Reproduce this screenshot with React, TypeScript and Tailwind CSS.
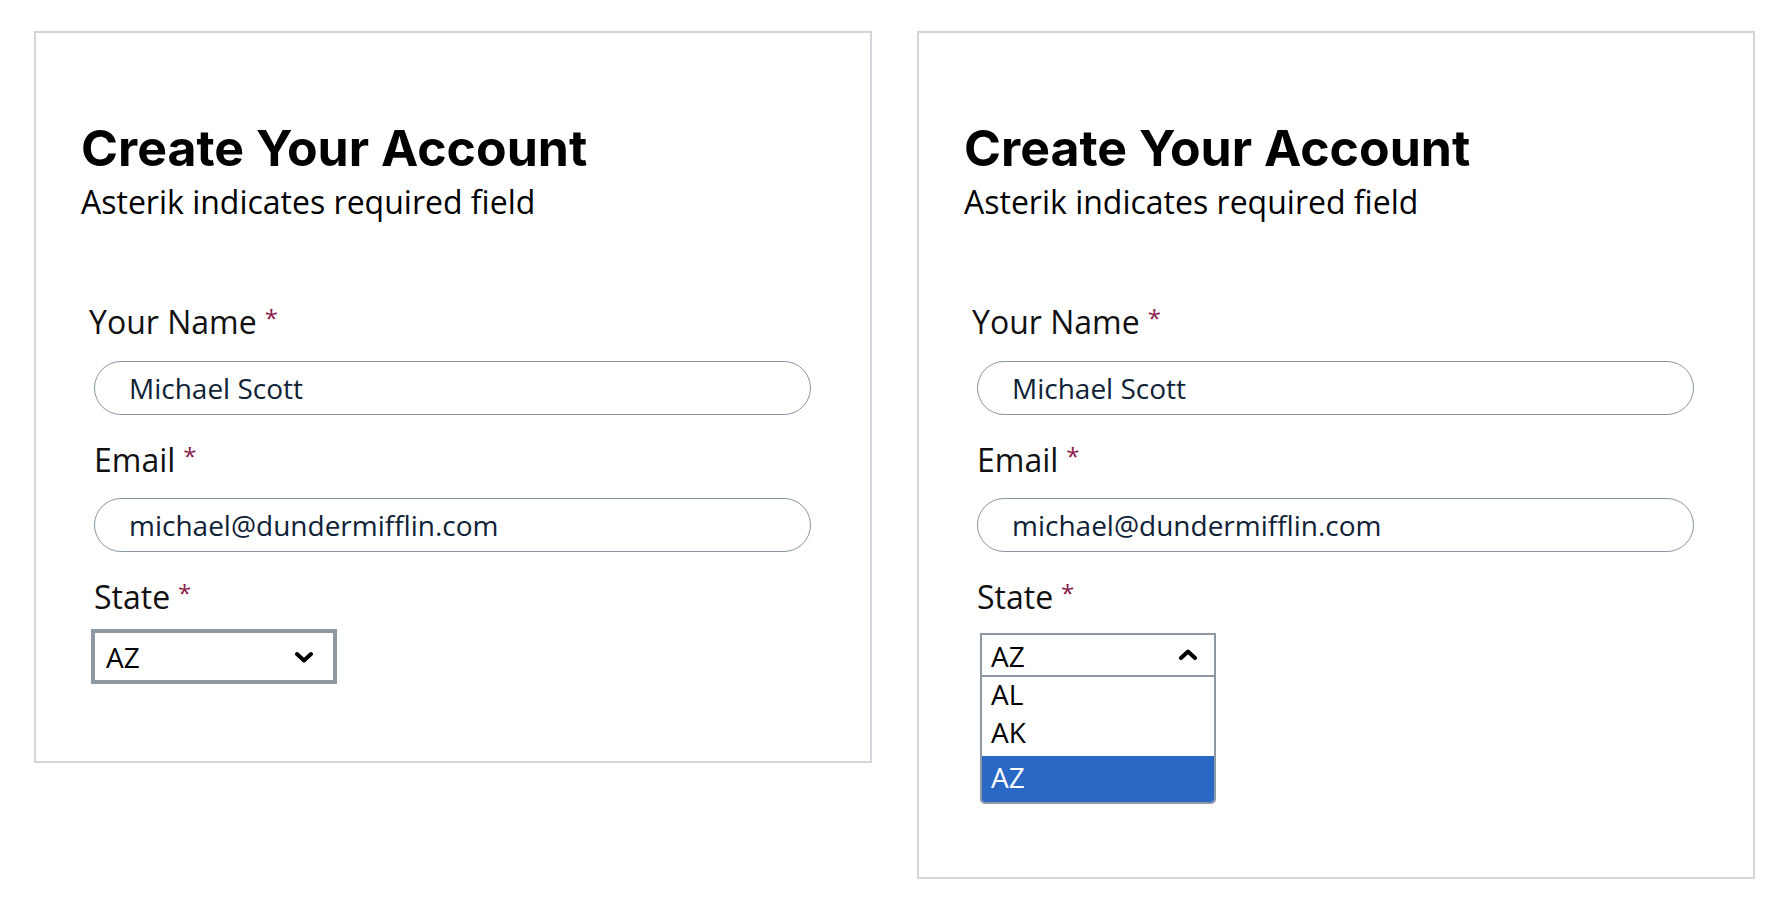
import React from "react";

const sans = "font-['Open_Sans',_'Noto_Sans',_sans-serif]";

const Star = () => (
  <span className="ml-[8px] text-[24px] leading-none text-[#8a1a4b] align-top">*</span>
);

const Label = ({ text, className }: { text: string; className: string }) => (
  <div className={`text-[32px] leading-none text-[#111] ${className}`}>
    {text}
    <Star />
  </div>
);

const Field = ({ value }: { value: string }) => (
  <div className="flex items-center h-[54px] w-[717px] rounded-full border-[1.5px] border-[#8a95a3] pl-[34px] text-[28px] text-[#0f2236]">
    {value}
  </div>
);

const ChevronDown = () => (
  <svg width="20" height="12" viewBox="0 0 20 12" fill="none">
    <polyline points="3,3 10,9.5 17,3" stroke="#000" strokeWidth="4" strokeLinecap="round" strokeLinejoin="round" />
  </svg>
);

const ChevronUp = () => (
  <svg width="20" height="12" viewBox="0 0 20 12" fill="none">
    <polyline points="3,9 10,2.5 17,9" stroke="#000" strokeWidth="4" strokeLinecap="round" strokeLinejoin="round" />
  </svg>
);

const ClosedSelect = () => (
  <div className="mt-[16px] ml-[-3px] flex items-center justify-between h-[55px] w-[246px] border-4 border-[#8e98a3] pl-[11px] pr-[19px] text-[28px] text-black">
    <span>AZ</span>
    <ChevronDown />
  </div>
);

const OpenSelect = () => (
  <div className="mt-[20px] ml-[3px] w-[236px] border-2 border-[#8e98a3] rounded-b-[5px] overflow-hidden text-[28px] text-black">
    <div className="flex items-center justify-between h-[42px] border-b-2 border-[#8e98a3] pl-[9px] pr-[16px]">
      <span className="leading-[38px] mt-[2px]">AZ</span>
      <ChevronUp />
    </div>
    <div className="h-[36px] pl-[9px] leading-[34px]">AL</div>
    <div className="h-[38px] pl-[9px] leading-[38px]">AK</div>
    <div className="h-[5px]" />
    <div className="h-[46px] pl-[9px] leading-[42px] bg-[#2a68c5] text-white">AZ</div>
  </div>
);

const Card = ({ open }: { open: boolean }) => (
  <div className={`w-[838px] border-2 border-[#d2d6db] bg-white pl-[45px] pt-[90px] ${open ? "pb-[73px]" : "pb-[77px]"} ${sans}`}>
    <h1 className="font-['Inter',_sans-serif] font-bold text-[50px] leading-none text-black">
      Create Your Account
    </h1>
    <p className="mt-[13px] text-[32px] leading-none text-black">Asterik indicates required field</p>

    <div className="mt-[88px] pl-[13px] flex flex-col">
      <Label text="Your Name" className="ml-[-5px]" />
      <div className="mt-[23px]">
        <Field value="Michael Scott" />
      </div>
      <Label text="Email" className="mt-[29px]" />
      <div className="mt-[22px]">
        <Field value="michael@dundermifflin.com" />
      </div>
      <Label text="State" className="mt-[29px]" />
      {open ? <OpenSelect /> : <ClosedSelect />}
    </div>
  </div>
);

export default function App() {
  return (
    <div className="min-h-screen bg-white flex items-start gap-[45px] pl-[34px] pt-[31px]">
      <Card open={false} />
      <Card open={true} />
    </div>
  );
}
